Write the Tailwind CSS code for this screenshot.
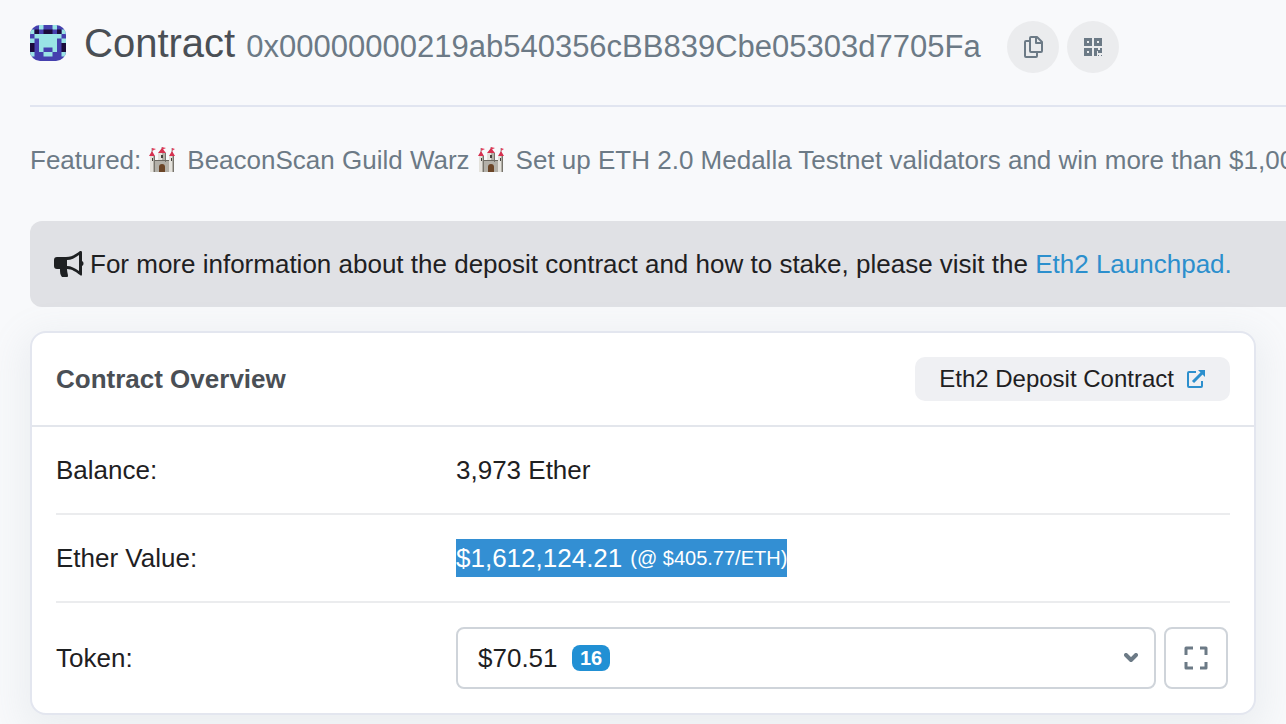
<!DOCTYPE html>
<html lang="en">

<head>
    <meta charset="UTF-8">
    <meta name="viewport" content="width=device-width, initial-scale=1.0">
    <title>Contract Overview</title>
    <script src="https://cdn.jsdelivr.net/npm/@tailwindcss/browser@4"></script>
</head>

<body class="bg-[#f8f9fb] min-h-screen overflow-hidden font-['Liberation_Sans',Arial,sans-serif] text-[26px] leading-[38px] text-[#1e2022]">

    <!-- Castle emoji, used twice in the featured line -->
    <svg class="hidden">
        <symbol id="castle" viewBox="0 0 26 26">
            <path d="M3 1v5M13 0v4M23 1v5" stroke="#999" stroke-width="1" />
            <path d="M3 1l4 1-4 2zM13 0l4 1-4 2zM23 1l3 1-3 2z" fill="#e0405e" />
            <path d="M0 9l3-5 3 5zM9 6l4-5 4 5zM20 9l3-5 3 5z" fill="#d6304f" />
            <path d="M1 9h5v4h3V6h8v7h3V9h5v16H1z" fill="#b3b0a8" />
            <path d="M1 9h3v16H1zM9 6h4v7H9zM20 9h3v16h-3z" fill="#e4e2dc" />
            <path d="M5 9h1v16H5zM16 6h1v9h-1zM24 9h1v16h-1z" fill="#77746c" />
            <path d="M6 13h14v1H6z" fill="#6d6a63" />
            <path d="M3 11h1v3H3zM12 8h2v3h-2zM22 11h1v3h-1z" fill="#46433e" />
            <path d="M10 25v-5a3 3 0 0 1 6 0v5z" fill="#6b4527" />
        </symbol>
    </svg>

    <div class="pl-[30px]">
        <!-- Title -->
        <header class="flex items-center h-[107px] pb-3 border-b-2 border-[#e1e5f0] whitespace-nowrap">
            <svg class="size-9 rounded-[10px] mr-[18px] mb-2 shrink-0" viewBox="0 0 8 8">
                <rect width="8" height="8" fill="#4540ae" />
                <path d="M2 0h1v1H2zM5 0h1v1H5zM0 1h1v1H0zM7 1h1v1H7zM2 2h4v3H2zM1 2h1v1H1zM6 2h1v1H6zM0 3h1v1H0zM7 3h1v1H7zM2 5h1v1H2zM5 5h1v1H5zM0 6h1v1H0zM7 6h1v1H7zM3 6h2v1H3z" fill="#99e4e5" />
                <path d="M3 1h2v1H3zM1 1h1v1H1zM6 1h1v1H6zM0 4h1v2H0zM7 4h1v2H7z" fill="#1b0c3b" />
            </svg>
            <h1 class="mb-1 text-[40px] text-[#4a4f55]">Contract <span class="text-[31px] text-[#6c7a86]">0x00000000219ab540356cBB839Cbe05303d7705Fa</span></h1>
            <button type="button" aria-label="Copy address" class="ml-[26px] size-[52px] rounded-full bg-[#ebecee] flex items-center justify-center text-[#6c7a86]">
                <svg class="size-6" viewBox="0 0 24 24" fill="none" stroke="currentColor" stroke-width="2" stroke-linejoin="round">
                    <path d="M10 2h6l5 5v9a1 1 0 0 1-1 1H10a1 1 0 0 1-1-1V3a1 1 0 0 1 1-1z" />
                    <path d="M15 2v6h6M9 6H5a1 1 0 0 0-1 1v14a1 1 0 0 0 1 1h10a1 1 0 0 0 1-1v-4" />
                </svg>
            </button>
            <button type="button" aria-label="View QR code" class="ml-2 size-[52px] rounded-full bg-[#ebecee] flex items-center justify-center text-[#6c7a86]">
                <svg class="size-5" viewBox="0 0 20 20" fill="currentColor">
                    <path fill-rule="evenodd" d="M1 1h8v8H1zM4 4v2h2V4zM11 1h8v8h-8zM14 4v2h2V4zM1 11h8v8H1zM4 14v2h2v-2z" />
                    <path d="M11 11h4v2h2v-2h2v5h-4v-2h-1v5h-3zM15 18h1v1h-1zM18 18h1v1h-1z" />
                </svg>
            </button>
        </header>

        <p class="flex items-center mt-[34px] whitespace-nowrap text-[#6c7a86]">
            Featured:
            <svg class="size-[26px] ml-2 mr-3 shrink-0" role="img" aria-label="castle"><use href="#castle" /></svg>
            BeaconScan Guild Warz
            <svg class="size-[26px] ml-2 mr-3 shrink-0" role="img" aria-label="castle"><use href="#castle" /></svg>
            Set up ETH 2.0 Medalla Testnet validators and win more than $1,00
        </p>

        <div class="flex items-center h-[86px] mt-[42px] pl-6 rounded-l-xl bg-[#e0e1e5] whitespace-nowrap">
            <svg class="w-[30px] h-[26px] mr-[6px] shrink-0" viewBox="0 0 30 26" fill="currentColor">
                <path fill-rule="evenodd" d="M27 0c1 0 1 1 1 2v8c2 1 2 4 0 5v8c0 2-1 2-2 1-4-3-8-6-13-6 0 3 1 5 1 7 0 1-1 1-2 1H8c-2-2-2-5-2-8H3c-2 0-3-1-3-3V9c0-2 1-3 3-3h9c6 0 10-3 14-6zM25 4c-4 3-8 5-12 5v6c4 0 8 2 12 5z" />
            </svg>
            <p>For more information about the deposit contract and how to stake, please visit the <a href="#" class="text-[#2c8fcd]">Eth2 Launchpad.</a></p>
        </div>
    </div>

    <!-- Overview card -->
    <main class="mx-[30px] mt-6 rounded-2xl border-2 border-[#e3e6ef] bg-white shadow-[0_10px_36px_8px_#8c98a41c]">
        <div class="flex items-center justify-between p-6 border-b-2 border-[#e3e6ec]">
            <h2 class="font-bold text-[#4a4f55]">Contract Overview</h2>
            <a href="#" class="flex items-center h-11 px-6 rounded-[10px] bg-[#eff0f3] text-[24px]">
                Eth2 Deposit Contract
                <svg class="size-5 ml-3 text-[#2c8fcd]" viewBox="0 0 20 20" fill="none" stroke="currentColor" stroke-width="2">
                    <path d="M10 3H3a1 1 0 0 0-1 1v13a1 1 0 0 0 1 1h12a1 1 0 0 0 1-1v-5" />
                    <path d="M7 13L17 3" stroke-width="3" />
                    <path d="M12 1h7v7z" fill="currentColor" stroke="none" />
                </svg>
            </a>
        </div>

        <div class="px-6">
            <div class="grid grid-cols-[400px_1fr] items-center py-6 border-b-2 border-[#ebecee]">
                <div>Balance:</div>
                <div>3,973 Ether</div>
            </div>
            <div class="grid grid-cols-[400px_1fr] items-center py-6 border-b-2 border-[#ebecee]">
                <div>Ether Value:</div>
                <div class="flex items-center gap-2 justify-self-start bg-[#338fd3] text-white">$1,612,124.21 <span class="text-[20px]">(@ $405.77/ETH)</span></div>
            </div>
            <div class="grid grid-cols-[400px_1fr] items-center py-6">
                <label for="token">Token:</label>
                <div class="flex gap-2 pr-[2px]">
                    <div class="relative flex-1">
                        <select id="token" class="block appearance-none w-full h-[62px] pl-5 rounded-lg border-2 border-[#cfd4da] bg-white">
                            <option>$70.51</option>
                        </select>
                        <span class="absolute left-[116px] top-[18px] h-[26px] px-2 rounded-lg bg-[#2190d4] text-white text-[20px] leading-[26px] font-bold pointer-events-none">16</span>
                        <svg class="absolute right-[18px] top-[26px] w-[14px] h-[10px] text-[#6c7a86] pointer-events-none" viewBox="0 0 14 10" fill="none" stroke="currentColor" stroke-width="4" stroke-linecap="round" stroke-linejoin="round">
                            <path d="M2 2l5 5 5-5" />
                        </svg>
                    </div>
                    <button type="button" aria-label="View all tokens" class="w-16 h-[62px] rounded-lg border-2 border-[#cfd4da] flex items-center justify-center text-[#6c7a86]">
                        <svg class="size-6" viewBox="0 0 24 24" fill="none" stroke="currentColor" stroke-width="3" stroke-linejoin="round">
                            <path d="M2 9V2h7M16 2h6v7M2 16v6h7M16 22h6v-6" />
                        </svg>
                    </button>
                </div>
            </div>
        </div>
    </main>
</body>

</html>
